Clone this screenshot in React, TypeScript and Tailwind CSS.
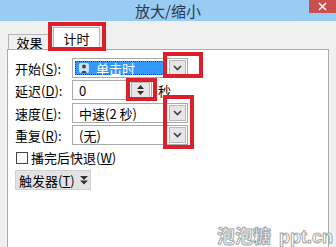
const cjk = "font-['Noto_Sans_CJK_SC','Noto_Sans',sans-serif]";

function DropBtn() {
    return (
        <div className="flex h-[16px] w-[17px] items-center justify-center border border-[#b9b9b9] bg-[#e6e6e6]">
            <svg width="9" height="6" viewBox="0 0 9 6">
                <path d="M1 1l3.5 3.5L8 1" fill="none" stroke="#404040" strokeWidth="1.6" />
            </svg>
        </div>
    );
}

function Label({ text, k }: { text: string; k: string }) {
    return (
        <div className="w-[57px] shrink-0 text-[13px] leading-none text-black">
            {text}(<span className="underline">{k}</span>):
        </div>
    );
}

function Select({ value }: { value: string }) {
    return (
        <div className="flex h-[20px] w-[116px] items-center justify-between border border-[#a9a9a9] bg-white pl-[6px] pr-[1px]">
            <span className="text-[13px] leading-none text-black">{value}</span>
            <DropBtn />
        </div>
    );
}

function Annot({ className }: { className: string }) {
    return <div className={'pointer-events-none absolute border-[4px] border-[#dc1f2b] ' + className} />;
}

export default function App() {
    return (
        <div className={`relative flex h-[247px] w-[336px] flex-col overflow-hidden bg-[#f0f0f0] ${cjk}`}>
            <div className="relative flex h-[21px] shrink-0 items-center justify-center bg-[#99ccf2]">
                <span className="text-[15px] leading-none text-[#2a3a4c]">放大/缩小</span>
                <div className="absolute right-0 top-0 flex h-[13px] w-[27px] items-center justify-center bg-[#c9504f]">
                    <svg width="9" height="9" viewBox="0 0 9 9">
                        <path d="M1 1l7 7M8 1l-7 7" stroke="#fff" strokeWidth="1.5" />
                    </svg>
                </div>
            </div>

            <div className="flex h-[28px] shrink-0 items-end pl-[8px]">
                <div className="flex h-[15px] w-[43px] items-center justify-center border border-b-0 border-[#b5b5b5] bg-[#f0f0f0] text-[13px] leading-none text-black">
                    效果
                </div>
                <div className="ml-[2px] flex h-[22px] w-[47px] items-center justify-center border border-b-0 border-[#b5b5b5] bg-white text-[13px] leading-none text-black">
                    计时
                </div>
            </div>

            <div className="mx-[7px] flex flex-1 flex-col border border-b-0 border-[#acacac] bg-white pl-[7px] pt-[8px]">
                <div className="flex items-center">
                    <Label text="开始" k="S" />
                    <div className="flex h-[20px] w-[116px] items-center justify-between border border-[#a9a9a9] bg-white pl-[2px] pr-[1px]">
                        <div className="flex h-[14px] w-[89px] items-center gap-[6px] border border-dotted border-[#1c3f7a] bg-[#3399ff] pl-[2px]">
                            <svg width="12" height="12" viewBox="0 0 12 12">
                                <rect x="1" y="1" width="10" height="10" rx="2" fill="#cfe3f7" />
                                <circle cx="6" cy="4.5" r="2" fill="#3a4a5c" />
                                <path d="M3.5 11c0-3 5-3 5 0z" fill="#3a4a5c" />
                            </svg>
                            <span className="text-[13px] leading-none text-white">单击时</span>
                        </div>
                        <DropBtn />
                    </div>
                </div>

                <div className="mt-[2px] flex items-center">
                    <Label text="延迟" k="D" />
                    <div className="flex h-[20px] w-[80px] items-center justify-between border border-[#a9a9a9] bg-white pl-[6px] pr-[1px]">
                        <span className="text-[13px] leading-none text-black">0</span>
                        <div className="flex h-[16px] w-[19px] flex-col items-center justify-center gap-[2px] border border-[#b9b9b9] bg-[#e6e6e6]">
                            <svg width="7" height="4" viewBox="0 0 7 4">
                                <path d="M0 4L3.5 0L7 4z" fill="#303030" />
                            </svg>
                            <svg width="7" height="4" viewBox="0 0 7 4">
                                <path d="M0 0L3.5 4L7 0z" fill="#303030" />
                            </svg>
                        </div>
                    </div>
                    <span className="ml-[6px] text-[13px] leading-none text-black">秒</span>
                </div>

                <div className="mt-[3px] flex items-center">
                    <Label text="速度" k="E" />
                    <Select value="中速(2 秒)" />
                </div>

                <div className="mt-[2px] flex items-center">
                    <Label text="重复" k="R" />
                    <Select value="(无)" />
                </div>

                <div className="mt-[6px] flex items-center gap-[3px] pl-[1px]">
                    <div className="h-[12px] w-[12px] border border-[#444] bg-white" />
                    <span className="text-[13px] leading-none text-black">
                        播完后快退(<span className="underline">W</span>)
                    </span>
                </div>

                <div className="mt-[6px] flex h-[20px] w-[76px] items-center gap-[5px] border border-[#d0d0d0] bg-[#e3e3e3] pl-[3px]">
                    <span className="text-[13px] leading-none text-black">
                        触发器(<span className="underline">T</span>)
                    </span>
                    <svg width="8" height="9" viewBox="0 0 8 9">
                        <path d="M0 0h8L4 4z M0 4.5h8L4 8.5z" fill="#303030" />
                    </svg>
                </div>
            </div>

            <Annot className="left-[48px] top-[22px] h-[29px] w-[58px]" />
            <Annot className="left-[163px] top-[52px] h-[26px] w-[40px]" />
            <Annot className="left-[126px] top-[78px] h-[23px] w-[31px]" />
            <Annot className="left-[163px] top-[95px] h-[54px] w-[31px]" />

            <div className="pointer-events-none absolute bottom-[1px] right-[3px] flex items-baseline gap-[8px] text-[18px] font-bold leading-none text-white [-webkit-text-stroke:1px_#a8a8a8]">
                <span>泡泡糖</span>
                <span className="font-['Liberation_Sans',sans-serif]">ppt.cn</span>
            </div>
        </div>
    );
}
